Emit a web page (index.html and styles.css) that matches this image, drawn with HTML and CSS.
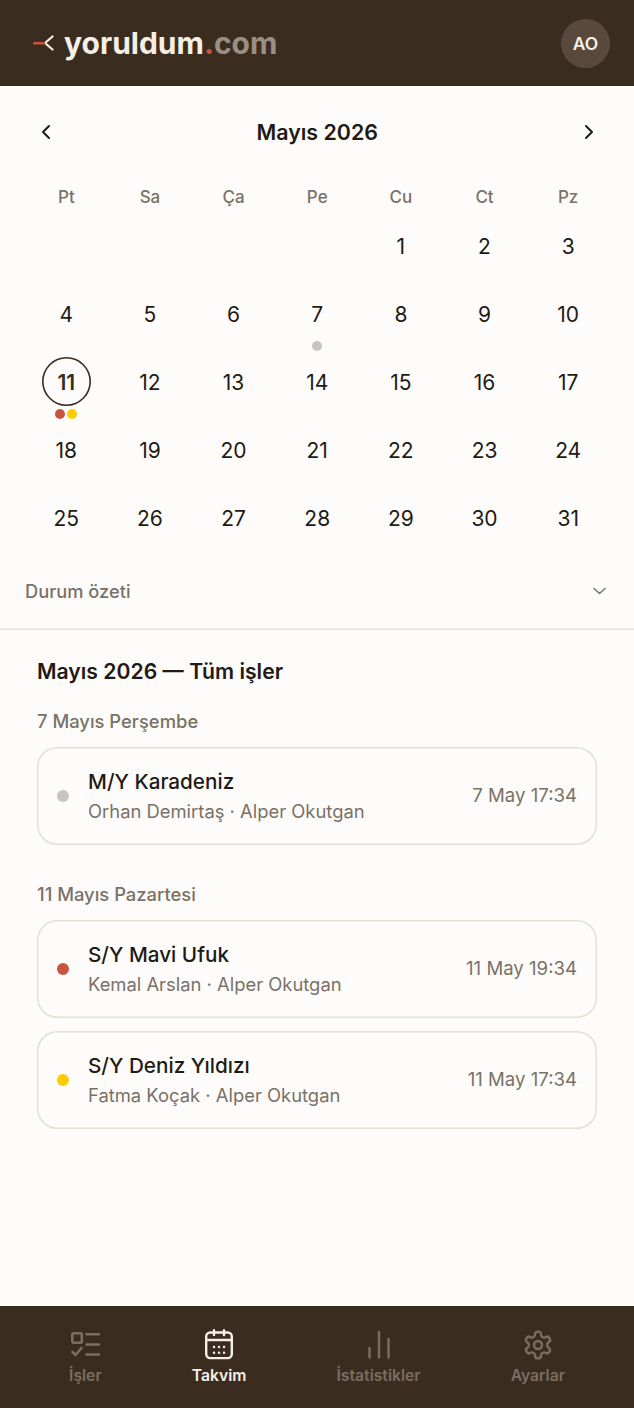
FILE: index.html
```html
<!DOCTYPE html>
<html lang="tr">
<head>
<meta charset="utf-8">
<title>yoruldum.com</title>
<link rel="stylesheet" href="styles.css">
</head>
<body>
<div class="app">
  <header class="topbar">
    <div class="logo">
      <svg class="logo-mark" width="22" height="16" viewBox="0 0 22 16" fill="none">
        <path d="M19.500 1.500 L12 8 L19.500 14.500" stroke="#f5efe6" stroke-width="2.3" stroke-linecap="round" stroke-linejoin="round"/>
        <path d="M1.300 8.200 H11" stroke="#c9553f" stroke-width="2.6" stroke-linecap="round"/>
      </svg>
      <span class="logo-text">yoruldum<span class="logo-dot">.</span><span class="logo-com">com</span></span>
    </div>
    <div class="avatar">AO</div>
  </header>

  <main class="main">
    <section class="calendar">
      <div class="month-nav">
        <svg width="24" height="24" viewBox="0 0 24 24" fill="none" stroke="#1f1a14" stroke-width="2" stroke-linecap="round" stroke-linejoin="round"><path d="M15 6l-6 6 6 6"/></svg>
        <div class="month-title">Mayıs 2026</div>
        <svg width="24" height="24" viewBox="0 0 24 24" fill="none" stroke="#1f1a14" stroke-width="2" stroke-linecap="round" stroke-linejoin="round"><path d="M9 6l6 6-6 6"/></svg>
      </div>
      <div class="weekdays">
        <span>Pt</span><span>Sa</span><span>Ça</span><span>Pe</span><span>Cu</span><span>Ct</span><span>Pz</span>
      </div>
      <div class="days">
        <div class="day"></div><div class="day"></div><div class="day"></div><div class="day"></div>
        <div class="day"><span class="num">1</span></div>
        <div class="day"><span class="num">2</span></div>
        <div class="day"><span class="num">3</span></div>
        <div class="day"><span class="num">4</span></div>
        <div class="day"><span class="num">5</span></div>
        <div class="day"><span class="num">6</span></div>
        <div class="day"><span class="num">7</span><span class="marks"><i class="dot dot-grey"></i></span></div>
        <div class="day"><span class="num">8</span></div>
        <div class="day"><span class="num">9</span></div>
        <div class="day"><span class="num">10</span></div>
        <div class="day"><span class="num today">11</span><span class="marks"><i class="dot dot-red"></i><i class="dot dot-yellow"></i></span></div>
        <div class="day"><span class="num">12</span></div>
        <div class="day"><span class="num">13</span></div>
        <div class="day"><span class="num">14</span></div>
        <div class="day"><span class="num">15</span></div>
        <div class="day"><span class="num">16</span></div>
        <div class="day"><span class="num">17</span></div>
        <div class="day"><span class="num">18</span></div>
        <div class="day"><span class="num">19</span></div>
        <div class="day"><span class="num">20</span></div>
        <div class="day"><span class="num">21</span></div>
        <div class="day"><span class="num">22</span></div>
        <div class="day"><span class="num">23</span></div>
        <div class="day"><span class="num">24</span></div>
        <div class="day"><span class="num">25</span></div>
        <div class="day"><span class="num">26</span></div>
        <div class="day"><span class="num">27</span></div>
        <div class="day"><span class="num">28</span></div>
        <div class="day"><span class="num">29</span></div>
        <div class="day"><span class="num">30</span></div>
        <div class="day"><span class="num">31</span></div>
      </div>
    </section>

    <div class="summary">
      <span>Durum özeti</span>
      <svg width="18" height="18" viewBox="0 0 18 18" fill="none" stroke="#7a7166" stroke-width="1.5" stroke-linecap="round" stroke-linejoin="round"><path d="M3 6.500L8.500 11.500 14 6.500"/></svg>
    </div>

    <section class="list">
      <h2 class="list-title">Mayıs 2026 — Tüm işler</h2>

      <h3 class="group-title">7 Mayıs Perşembe</h3>
      <div class="cards">
        <article class="card">
          <i class="status dot-grey"></i>
          <div class="card-body">
            <div class="card-name">M/Y Karadeniz</div>
            <div class="card-sub">Orhan Demirtaş · Alper Okutgan</div>
          </div>
          <div class="card-time">7 May 17:34</div>
        </article>
      </div>

      <h3 class="group-title group-next">11 Mayıs Pazartesi</h3>
      <div class="cards">
        <article class="card">
          <i class="status dot-red"></i>
          <div class="card-body">
            <div class="card-name">S/Y Mavi Ufuk</div>
            <div class="card-sub">Kemal Arslan · Alper Okutgan</div>
          </div>
          <div class="card-time">11 May 19:34</div>
        </article>
        <article class="card">
          <i class="status dot-yellow"></i>
          <div class="card-body">
            <div class="card-name">S/Y Deniz Yıldızı</div>
            <div class="card-sub">Fatma Koçak · Alper Okutgan</div>
          </div>
          <div class="card-time">11 May 17:34</div>
        </article>
      </div>
    </section>
  </main>

  <nav class="tabbar">
    <div class="tab">
      <svg width="32" height="32" viewBox="0 0 32 32" fill="none" stroke="currentColor" stroke-width="2.6" stroke-linecap="round" stroke-linejoin="round">
        <rect x="3.300" y="4.300" width="9.500" height="9.500" rx="1.200"/>
        <path d="M17.500 5.300H30M17.500 15.500H30M17.500 25.500H30"/>
        <path d="M3.500 23l3 3 6-7"/>
      </svg>
      <span>İşler</span>
    </div>
    <div class="tab tab-active">
      <svg width="32" height="32" viewBox="0 0 32 32" fill="none" stroke="currentColor" stroke-width="2.4" stroke-linecap="round" stroke-linejoin="round">
        <rect x="3.200" y="3.500" width="25.600" height="25.600" rx="4"/>
        <path d="M3.200 11H28.800M11 1.200V6M21 1.200V6"/>
        <path d="M11 18h.1M16 18h.1M21 18h.1M11 23.700h.1M16 23.700h.1M21 23.700h.1"/>
      </svg>
      <span>Takvim</span>
    </div>
    <div class="tab">
      <svg width="32" height="32" viewBox="0 0 32 32" fill="none" stroke="currentColor" stroke-width="2.400" stroke-linecap="round">
        <path d="M6.500 19V28.500M16 3V28.500M25.500 10V28.500"/>
      </svg>
      <span>İstatistikler</span>
    </div>
    <div class="tab">
      <svg width="32" height="32" viewBox="0 0 24 24" fill="none" stroke="currentColor" stroke-width="1.800" stroke-linecap="round" stroke-linejoin="round">
        <path d="M12.220 2h-.44a2 2 0 0 0-2 2v.18a2 2 0 0 1-1 1.730l-.43.25a2 2 0 0 1-2 0l-.15-.08a2 2 0 0 0-2.730.730l-.22.38a2 2 0 0 0 .73 2.730l.15.1a2 2 0 0 1 1 1.720v.51a2 2 0 0 1-1 1.740l-.15.09a2 2 0 0 0-.73 2.730l.22.38a2 2 0 0 0 2.730.73l.15-.08a2 2 0 0 1 2 0l.43.25a2 2 0 0 1 1 1.730V20a2 2 0 0 0 2 2h.44a2 2 0 0 0 2-2v-.18a2 2 0 0 1 1-1.730l.43-.25a2 2 0 0 1 2 0l.15.08a2 2 0 0 0 2.730-.73l.22-.39a2 2 0 0 0-.73-2.730l-.15-.08a2 2 0 0 1-1-1.740v-.5a2 2 0 0 1 1-1.740l.15-.09a2 2 0 0 0 .73-2.730l-.22-.38a2 2 0 0 0-2.730-.73l-.15.08a2 2 0 0 1-2 0l-.43-.25a2 2 0 0 1-1-1.730V4a2 2 0 0 0-2-2z"/>
        <circle cx="12" cy="12" r="3"/>
      </svg>
      <span>Ayarlar</span>
    </div>
  </nav>
</div>
</body>
</html>
```

FILE: styles.css
```css
* { box-sizing: border-box; }
html, body { margin: 0; padding: 0; }
body {
  font-family: Inter, "Noto Sans", "Liberation Sans", sans-serif;
  background: #fdfcfa;
  color: #1f1a14;
}
.app {
  width: 634px;
  height: 1408px;
  display: flex;
  flex-direction: column;
  overflow: hidden;
}
.topbar {
  height: 86px;
  background: #3b2c20;
  display: flex;
  align-items: center;
  justify-content: space-between;
  padding: 0 24px 0 33px;
  flex: none;
}
.logo { display: flex; align-items: center; gap: 9px; }
.logo-mark { display: block; margin-bottom: 1px; }
.logo-text {
  font-weight: 700;
  font-size: 30px;
  line-height: 36px;
  color: #f5efe6;
}
.logo-dot { color: #c9553f; }
.logo-com { color: #9a8f83; }
.avatar {
  width: 49px;
  height: 49px;
  border-radius: 50%;
  background: #59493d;
  color: #f5efe6;
  font-size: 17.500px;
  font-weight: 600;
  display: flex;
  align-items: center;
  justify-content: center;
}
.main { flex: 1; min-height: 0; }
.calendar { padding: 0 24px 0 24.500px; }
.month-nav {
  height: 94px;
  display: flex;
  align-items: center;
  justify-content: space-between;
  padding: 0 9px 2px;
}
.month-title { font-size: 21.400px; font-weight: 600; line-height: 24px; }
.weekdays {
  display: grid;
  grid-template-columns: repeat(7, 1fr);
  height: 34px;
  align-items: center;
  text-align: center;
  font-size: 17px;
  font-weight: 500;
  color: #7a7166;
}
.days {
  display: grid;
  grid-template-columns: repeat(7, 1fr);
  grid-auto-rows: 68px;
}
.day {
  display: flex;
  flex-direction: column;
  align-items: center;
  position: relative;
  padding-top: 7px;
}
.num {
  width: 49px;
  height: 49px;
  padding-top: 2px;
  border-radius: 50%;
  display: flex;
  align-items: center;
  justify-content: center;
  font-size: 21px;
  line-height: 24px;
}
.today {
  box-shadow: inset 0 0 0 1.600px #3b2c20;
  font-weight: 600;
  color: #3b2c20;
}
.marks {
  position: absolute;
  top: 59px;
  left: 0;
  right: 0;
  display: flex;
  justify-content: center;
  gap: 2px;
}
.dot { width: 10px; height: 10px; border-radius: 50%; display: block; }
.dot-grey { background: #c8c5c1; }
.dot-red { background: #c9553f; }
.dot-yellow { background: #ffcc00; }
.summary {
  margin-top: 6px;
  height: 70px;
  padding: 0 25px 8px;
  box-shadow: inset 0 -1.500px 0 #e6dfd5;
  display: flex;
  align-items: center;
  justify-content: space-between;
  font-size: 18.300px;
  font-weight: 500;
  color: #7a7166;
}
.list { padding: 0 37px; }
.list-title {
  margin: 28px 0 0;
  font-size: 21.200px;
  line-height: 26px;
  font-weight: 600;
}
.group-title {
  margin: 26px 0 15px;
  font-size: 18.400px;
  line-height: 22px;
  font-weight: 500;
  color: #7a7166;
}
.group-next { margin-top: 38px; }
.cards { display: flex; flex-direction: column; gap: 13px; }
.card {
  height: 98px;
  box-shadow: inset 0 0 0 1.500px #e6dfd5;
  border-radius: 20px;
  display: flex;
  align-items: center;
  padding: 0 20px;
}
.status { width: 12px; height: 12px; border-radius: 50%; flex: none; display: block; margin-right: 19px; }
.card-body { flex: 1; min-width: 0; margin-bottom: 1px; }
.card-name { font-size: 20.700px; line-height: 26px; font-weight: 500; color: #1f1a14; }
.card-sub { font-size: 18.400px; line-height: 22px; margin-top: 5px; color: #7a7166; }
.card-time { font-size: 18.600px; color: #7a7166; margin-bottom: 2px; }
.tabbar {
  flex: none;
  height: 102px;
  background: #3b2c20;
  display: flex;
  justify-content: space-around;
  padding: 0 24px;
}
.tab {
  display: flex;
  flex-direction: column;
  align-items: center;
  padding-top: 23px;
  gap: 6px;
  color: #7b6d61;
  font-size: 15.700px;
  font-weight: 600;
  line-height: 18px;
}
.tab-active { color: #f5efe6; }
.tab svg { display: block; }
```
